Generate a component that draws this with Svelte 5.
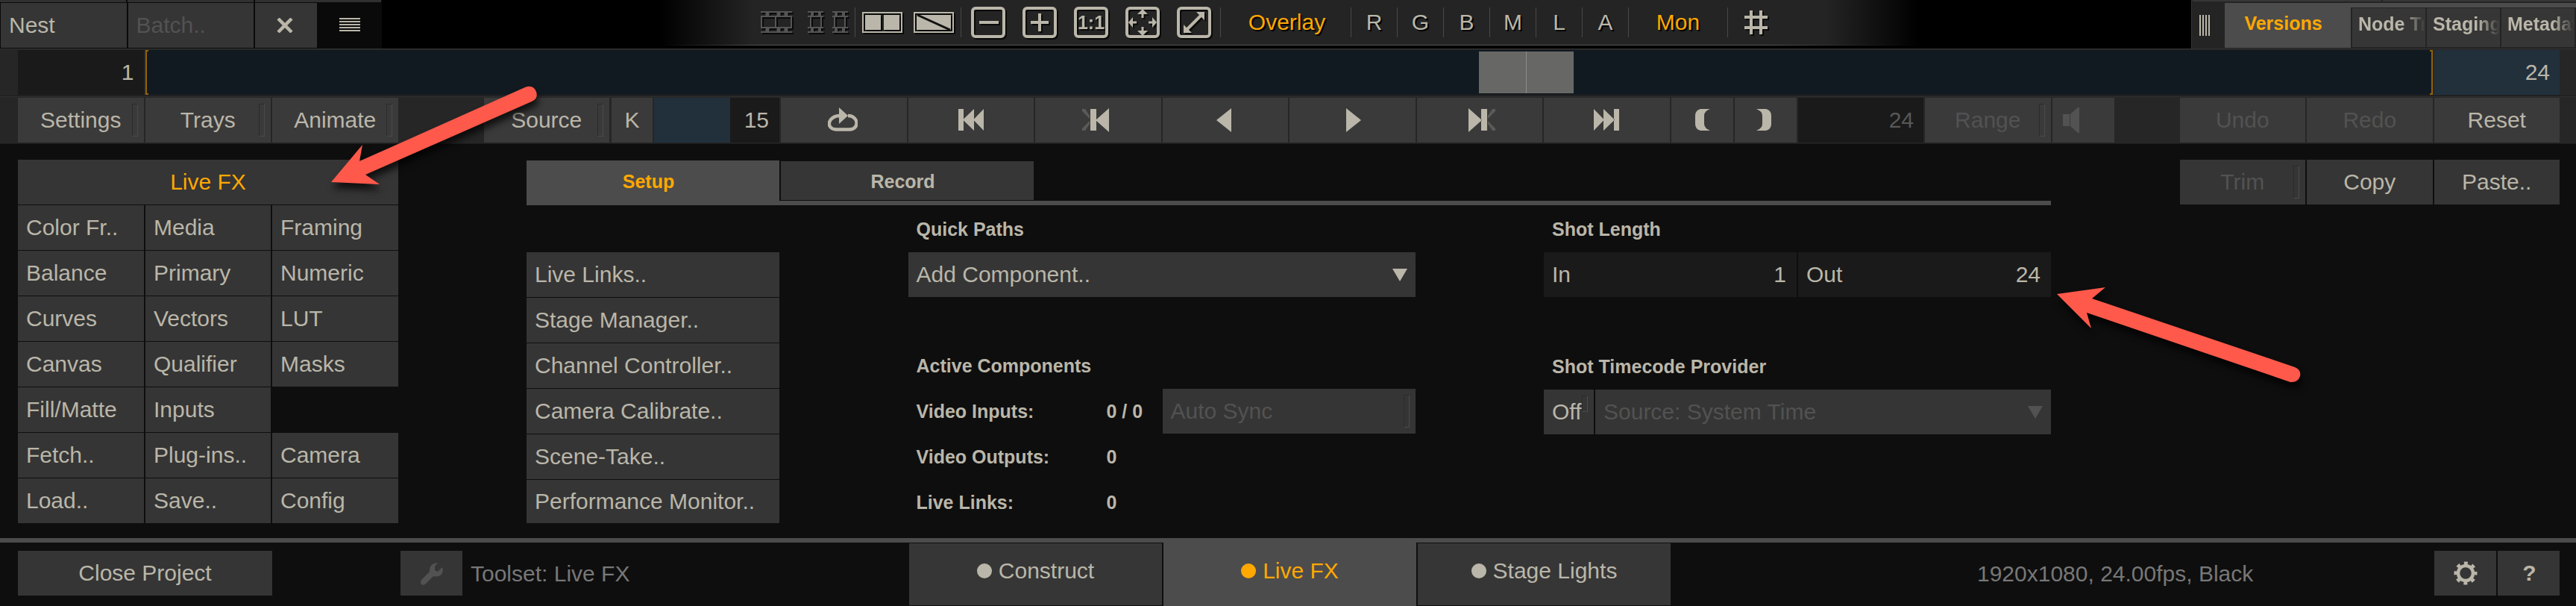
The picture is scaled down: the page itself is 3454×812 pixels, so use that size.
<script>
  const menus = ['Settings', 'Trays', 'Animate'];
  const channels = ['R', 'G', 'B', 'M', 'L', 'A'];
  const sideTabs = ['Node Tr', 'Staging', 'Metadat'];

  // an empty string leaves a hole in the grid
  const tools = [
    'Color Fr..', 'Media', 'Framing',
    'Balance', 'Primary', 'Numeric',
    'Curves', 'Vectors', 'LUT',
    'Canvas', 'Qualifier', 'Masks',
    'Fill/Matte', 'Inputs', '',
    'Fetch..', 'Plug-ins..', 'Camera',
    'Load..', 'Save..', 'Config'
  ];

  const setupItems = [
    'Live Links..',
    'Stage Manager..',
    'Channel Controller..',
    'Camera Calibrate..',
    'Scene-Take..',
    'Performance Monitor..'
  ];

  const footerTabs = ['Construct', 'Live FX', 'Stage Lights'];
  let activeTab = 'Live FX';

  const frames = 24;
  const frame = 15;
</script>

<div class="app">
  <header class="top">
    <div class="nest">
      <div class="sliver"><i></i><i></i><i></i></div>
      <div class="nest-row">
        <button class="btn left">Nest</button>
        <button class="btn left disabled">Batch..</button>
        <button class="btn half">
          <svg class="cross" width="22" height="20" viewBox="0 0 22 20" fill="none" stroke="currentColor">
            <path stroke-width="4.500" d="M2 1L20 19M20 1L2 19" />
          </svg>
        </button>
        <div class="burger">
          <svg width="28" height="18" viewBox="0 0 28 18" fill="currentColor">
            <path d="M0 0h28v2H0zM0 4h28v2H0zM0 8h28v2H0zM0 12h28v2H0zM0 16h28v2H0z" />
          </svg>
        </div>
      </div>
    </div>

    <div class="view-bar">
      <svg class="dim film" width="42" height="30" viewBox="0 0 42 30" fill="none" stroke="currentColor" stroke-width="2">
        <path d="M0 1h42M0 7h42M0 22h42M0 28h42M1 7v15M41 7v15M20 7v15" />
        <path stroke-width="5" d="M9 1v6M24 1v6M34 1v6M9 22v6M24 22v6M34 22v6" />
      </svg>
      <svg class="dim film-split" width="54" height="30" viewBox="0 0 54 30" fill="none" stroke="currentColor" stroke-width="2">
        <path d="M0 1h21M0 7h21M0 22h21M0 28h21M4 7v15M18 7v15M33 1h21M33 7h21M33 22h21M33 28h21M36 7v15M50 7v15" />
        <path stroke-width="4" d="M6 1v6M16 1v6M6 22v6M16 22v6M38 1v6M48 1v6M38 22v6M48 22v6" />
      </svg>
      <span class="sep"></span>
      <svg class="panes" width="54" height="28" viewBox="0 0 54 28">
        <path fill="none" stroke="currentColor" stroke-width="2" d="M1 1h52v26H1z" />
        <path fill="currentColor" d="M4 4h21v20H4zM29 4h21v20H29z" />
      </svg>
      <svg class="wipe" width="54" height="28" viewBox="0 0 54 28">
        <path fill="none" stroke="currentColor" stroke-width="2" d="M1 1h52v26H1z" />
        <path fill="currentColor" d="M4 4h46v20H4z" />
        <path stroke="#111" stroke-width="3" d="M5 4L49 24" />
      </svg>
      <span class="sep"></span>
      <div class="zooms">
        <svg width="46" height="42" viewBox="0 0 46 42" fill="none" stroke="currentColor" stroke-width="4">
          <rect x="2" y="2" width="42" height="38" rx="4" />
          <path d="M11 21h26" />
        </svg>
        <svg width="46" height="42" viewBox="0 0 46 42" fill="none" stroke="currentColor" stroke-width="4">
          <rect x="2" y="2" width="42" height="38" rx="4" />
          <path d="M11 21h24M23 9v24" />
        </svg>
        <svg width="46" height="42" viewBox="0 0 46 42" fill="none" stroke="currentColor" stroke-width="4">
          <rect x="2" y="2" width="42" height="38" rx="4" />
          <text x="23" y="29.5" text-anchor="middle">1:1</text>
        </svg>
        <svg width="46" height="42" viewBox="0 0 46 42" fill="none" stroke="currentColor" stroke-width="4">
          <rect x="2" y="2" width="42" height="38" rx="4" />
          <path stroke-width="3" d="M23 6v9M23 27v9M6 21h9M31 21h9" />
          <path fill="currentColor" stroke="none" d="M23 3l7 7H16zM23 39l7-7H16zM4 21l6-7v14zM42 21l-6-7v14z" />
        </svg>
        <svg width="46" height="42" viewBox="0 0 46 42" fill="none" stroke="currentColor" stroke-width="4">
          <rect x="2" y="2" width="42" height="38" rx="4" />
          <path d="M13 31L33 11" />
          <path fill="currentColor" stroke="none" d="M37 7v11L26 7zM9 35V24l11 11z" />
        </svg>
      </div>
      <span class="sep"></span>
      <span class="lbl on overlay">Overlay</span>
      {#each channels as c}
        <span class="sep"></span>
        <span class="lbl chan">{c}</span>
      {/each}
      <span class="sep"></span>
      <span class="lbl on mon">Mon</span>
      <span class="sep"></span>
      <svg class="hash" width="31" height="32" viewBox="0 0 31 32" stroke="currentColor">
        <path stroke-width="4" d="M0 9h31M0 23h31M9 0v32M22 0v32" />
      </svg>
    </div>

    <div class="side">
      <div class="side-sliver"><i></i><i></i></div>
      <div class="side-row">
        <div class="grip">
          <svg width="14" height="28" viewBox="0 0 14 28" fill="currentColor">
            <path d="M0 0h2v28H0zM4 0h2v28H4zM8 0h2v28H8zM12 0h2v28H12z" />
          </svg>
        </div>
        <div class="side-active">Versions</div>
        <div class="side-tabs">
          {#each sideTabs as t}
            <div class="side-tab"><span>{t}</span></div>
          {/each}
        </div>
      </div>
    </div>
  </header>

  <div class="timeline">
    <div class="num">1</div>
    <div class="track">
      <div class="bracket open"></div>
      <div class="head"></div>
      <div class="bracket close"></div>
    </div>
    <div class="num end">{frames}</div>
  </div>

  <div class="toolbar">
    {#each menus as m}
      <button class="btn">{m}<i class="notch"></i></button>
    {/each}
    <button class="btn source">Source<i class="notch"></i></button>
    <button class="btn key">K</button>
    <div class="counter"><span>{frame}</span></div>
    <button class="btn">
      <svg class="loop" width="40" height="34" viewBox="0 0 40 34">
        <path fill="none" stroke="currentColor" stroke-width="4.5" d="M17 11C-1 11 -3 29 11 29.5H29C43 29 41 11 27 11" />
        <path fill="currentColor" d="M15 0L27 11L15 22z" />
      </svg>
    </button>
    <button class="btn">
      <svg width="34" height="30" viewBox="0 0 34 30" fill="currentColor">
        <path d="M0 0h7v29H0zM21 0v29L6 14.500zM34 0v29L20 14.500z" />
      </svg>
    </button>
    <button class="btn">
      <svg width="43" height="32" viewBox="0 0 43 32" fill="currentColor">
        <path fill="#5a5a57" d="M0 1h4l6 9v4L0 4zM0 30h4l6-9v-4L0 27z" />
        <path d="M11 1h8v29h-8zM36 0v32L18 16z" />
      </svg>
    </button>
    <button class="btn">
      <svg class="rev" width="20" height="32" viewBox="0 0 20 32" fill="currentColor"><path d="M20 0v32L0 16z" /></svg>
    </button>
    <button class="btn">
      <svg class="play" width="20" height="32" viewBox="0 0 20 32" fill="currentColor"><path d="M0 0v32l20-16z" /></svg>
    </button>
    <button class="btn">
      <svg class="fwd" width="36" height="32" viewBox="0 0 36 32" fill="currentColor">
        <path fill="#5a5a57" d="M36 1h-4l-6 9v4l10-10zM36 30h-4l-6-9v-4l10 10z" />
        <path d="M17 1h8v29h-8zM0 0v32l18-16z" />
      </svg>
    </button>
    <button class="btn">
      <svg width="34" height="30" viewBox="0 0 34 30" fill="currentColor">
        <path d="M27 0h7v29h-7zM13 0v29l15-14.500zM0 0v29l14-14.500z" />
      </svg>
    </button>
    <button class="btn half">
      <svg class="open-paren" width="20" height="30" viewBox="0 0 20 30" fill="currentColor">
        <path d="M20 0H7Q0 2 0 9v11q0 7 7 9h13q-8-3-8-9V9q0-6 8-9z" />
      </svg>
    </button>
    <button class="btn half">
      <svg class="close-paren" width="20" height="30" viewBox="0 0 20 30" fill="currentColor">
        <path d="M0 0h13q7 2 7 9v11q0 7-7 9H0q8-3 8-9V9q0-6-8-9z" />
      </svg>
    </button>
    <div class="num dim-num">{frames}</div>
    <button class="btn disabled">Range<i class="notch"></i></button>
    <button class="btn half speaker disabled">
      <svg width="23" height="34" viewBox="0 0 23 34" fill="currentColor">
        <path d="M0 9h9v16H0zM10 9L20 0h2v34h-2L10 25z" />
      </svg>
    </button>
    <span class="push"></span>
    <button class="btn disabled">Undo</button>
    <button class="btn disabled">Redo</button>
    <button class="btn">Reset</button>
  </div>

  <main>
    <div class="tools">
      <button class="btn title">Live FX</button>
      {#each tools as t}
        {#if t}
          <button class="btn left">{t}</button>
        {:else}
          <span></span>
        {/if}
      {/each}
    </div>

    <section class="setup">
      <div class="tabs">
        <div class="tab active">Setup</div>
        <div class="tab">Record</div>
      </div>
      <div class="cols">
        <div class="list">
          {#each setupItems as item}
            <button class="btn left">{item}</button>
          {/each}
        </div>

        <div class="col">
          <h3>Quick Paths</h3>
          <div class="select">Add Component..
            <svg width="20" height="17" viewBox="0 0 20 17" fill="currentColor"><path d="M0 0h20L10 17z" /></svg>
          </div>
          <span></span>
          <h3>Active Components</h3>
          <div class="stat">
            <b>Video Inputs:</b><b>0 / 0</b>
            <button class="btn left disabled sync">Auto Sync<i class="notch"></i></button>
          </div>
          <div class="stat"><b>Video Outputs:</b><b>0</b></div>
          <div class="stat"><b>Live Links:</b><b>0</b></div>
        </div>

        <div class="col">
          <h3>Shot Length</h3>
          <div class="pair">
            <div class="field"><span>In</span><span>1</span></div>
            <div class="field"><span>Out</span><span>{frames}</span></div>
          </div>
          <span></span>
          <h3 class="low">Shot Timecode Provider</h3>
          <div class="provider">
            <button class="btn left off">Off<i class="notch"></i></button>
            <div class="select disabled">Source: System Time
              <svg width="20" height="17" viewBox="0 0 20 17" fill="currentColor"><path d="M0 0h20L10 17z" /></svg>
            </div>
          </div>
        </div>
      </div>
    </section>

    <div class="actions">
      <button class="btn disabled">Trim<i class="notch"></i></button>
      <button class="btn">Copy</button>
      <button class="btn">Paste..</button>
    </div>
  </main>

  <footer>
    <button class="btn close-project">Close Project</button>
    <button class="btn wrench disabled">
      <svg width="30" height="31" viewBox="0 0 30 31" fill="currentColor">
        <path d="M23 1L19 6v5l4 2 6-6q3 9-5 12-4 1-7 0L7 29q-3 3-6 1-2-2 0-6L12 13Q11 2 23 1z" />
      </svg>
    </button>
    <span class="muted">Toolset: Live FX</span>
    <div class="footer-tabs">
      {#each footerTabs as t}
        <button class="ftab" class:active={t === activeTab} on:click={() => (activeTab = t)}>
          <i class="dot"></i>{t}
        </button>
      {/each}
    </div>
    <span class="muted info">1920x1080, 24.00fps, Black</span>
    <div class="foot-icons">
      <button class="btn half">
        <svg width="32" height="32" viewBox="0 0 32 32" fill="none" stroke="currentColor">
          <circle cx="16" cy="16" r="10" stroke-width="4.500" />
          <circle cx="16" cy="16" r="13.500" stroke-width="4" stroke-dasharray="5 5.600" stroke-dashoffset="2.500" />
        </svg>
      </button>
      <button class="btn half help">?</button>
    </div>
  </footer>

  <!-- callout arrows over the panel -->
  <svg class="callouts" width="3454" height="812" viewBox="0 0 3454 812">
    <path d="M444 244L486 194L482 216L704 117Q715 113 719 123Q722 132 713 136L490 234L509 247Z" />
    <path d="M2758 394L2823 385L2805 400L3077 492Q3086 496 3084 504Q3081 513 3071 512L2798 419L2804 440Z" />
  </svg>
</div>

<style>
  :global(body) {
    background: #0e0e0e;
  }

  .app {
    position: relative;
    display: flex;
    flex-direction: column;
    width: 3454px;
    height: 812px;
    overflow: hidden;
    background: #0e0e0e;
    color: #bab6a9;
    font-family: "Liberation Sans", Arial, sans-serif;
    font-size: 30px;
  }

  svg {
    display: block;
    flex: none;
  }

  .btn {
    position: relative;
    display: flex;
    flex: none;
    align-items: center;
    justify-content: center;
    box-sizing: border-box;
    width: 168.5px;
    height: 60px;
    margin: 0;
    padding: 0;
    border: 0;
    background: #353535;
    color: inherit;
    font: inherit;
    white-space: nowrap;
  }

  .btn.left {
    justify-content: flex-start;
    padding-left: 11px;
  }

  .btn.half {
    width: 83px;
  }

  .app .disabled {
    color: #525252;
  }

  .notch {
    position: absolute;
    top: 8px;
    right: 8px;
    box-sizing: border-box;
    width: 8px;
    height: 44px;
    border: 1px solid #2b2b2b;
    border-right-color: #4b4b4b;
    border-bottom-color: #4b4b4b;
  }

  .num {
    flex: none;
    box-sizing: border-box;
    width: 168.5px;
    height: 60px;
    padding-right: 13px;
    background: #1a1a1a;
    line-height: 60px;
    text-align: right;
  }

  /* top row */
  .top {
    display: flex;
    flex: none;
    height: 65px;
    background: #000;
  }

  .nest {
    width: 512px;
    background: #0a0a0a;
  }

  .sliver {
    display: flex;
    gap: 2px;
    height: 3px;
    margin-bottom: 1px;
  }

  .sliver i {
    width: 169px;
    background: #303030;
  }

  .nest-row {
    display: flex;
    gap: 2px;
    padding-left: 1px;
  }

  .cross {
    margin-right: 3px;
  }

  .burger {
    display: flex;
    align-items: center;
    padding-left: 28px;
    height: 58px;
  }

  .view-bar {
    display: flex;
    align-items: center;
    box-sizing: border-box;
    width: 1690px;
    height: 61px;
    margin-left: 371px;
    padding-left: 137px;
    border-bottom: 1px solid;
    border-image: linear-gradient(90deg, #000, #555 8%, #555 88%, #000) 1;
    background: linear-gradient(90deg, #000, #242424 127px, #242424 1565px, #000);
  }

  .view-bar svg {
    filter: drop-shadow(2px 2px 0 #0a0a0a);
  }

  .dim {
    color: #555;
  }

  .film-split {
    margin: 0 9px 0 21px;
  }

  .sep {
    flex: none;
    width: 1px;
    height: 40px;
    background: #484848;
  }

  .panes {
    margin: 0 15px 0 9px;
  }

  .wipe {
    margin-right: 9px;
  }

  .zooms {
    display: flex;
    gap: 23px;
    margin: 0 12px 0 13px;
  }

  .zooms text {
    fill: currentColor;
    stroke: none;
    font-size: 25px;
    font-weight: bold;
  }

  .lbl {
    flex: none;
    text-align: center;
    text-shadow: 2px 2px 0 #000;
  }

  .on,
  .btn.title {
    color: #ffa800;
  }

  .overlay {
    width: 174px;
    text-indent: 3px;
  }

  .chan {
    width: 61px;
  }

  .mon {
    width: 132px;
  }

  .hash {
    margin-left: 22px;
  }

  .side {
    display: flex;
    flex: none;
    flex-direction: column;
    box-sizing: border-box;
    width: 516px;
    margin-left: auto;
    overflow: hidden;
    border-left: 1px solid #333;
    background: #242424;
    font-size: 25px;
    font-weight: bold;
  }

  .side-sliver {
    display: flex;
    gap: 2px;
    height: 2px;
    margin: 0 0 2px 1px;
  }

  .side-sliver i {
    flex: none;
    width: 253px;
    background: #363636;
  }

  .side-sliver i:last-child {
    width: 260px;
  }

  .side-row {
    display: flex;
    height: 60px;
  }

  .grip {
    width: 44px;
    padding: 16px 0 0 10px;
    box-sizing: border-box;
  }

  .side-active {
    width: 169px;
    box-sizing: border-box;
    padding-right: 12px;
    background: #4c4c4c;
    color: #ffa800;
    line-height: 55px;
    text-align: center;
  }

  .side-tabs {
    display: flex;
    flex: 1;
    gap: 2px;
    box-sizing: border-box;
    border-top: 6px solid #4c4c4c;
    padding: 1px 2px 1px;
  }

  .side-tab {
    width: 98px;
    height: 52px;
    overflow: hidden;
    background: #363636;
    line-height: 42px;
    white-space: nowrap;
  }

  .side-tab span {
    display: block;
    padding-left: 8px;
    mask-image: linear-gradient(90deg, #000 70%, transparent);
  }

  /* timeline */
  .timeline,
  .toolbar {
    display: flex;
    flex: none;
    box-sizing: border-box;
    height: 64px;
    padding: 1px 22px 0 24px;
    gap: 2px;
    border-top: 1px solid #323232;
    border-bottom: 1px solid #1b1b1b;
    background: #262626;
  }

  .track {
    display: flex;
    flex: 1;
    height: 60px;
    background: #121a21;
  }

  .bracket {
    box-sizing: border-box;
    width: 4px;
    border: 2px solid #936205;
  }

  .bracket.open {
    border-right: 0;
  }

  .bracket.close {
    margin-left: auto;
    border-left: 0;
  }

  .head {
    width: 127px;
    height: 56px;
    margin: 2px 0 0 1784px;
    background: linear-gradient(90deg, #676865 63px, #8d8e88 63px, #8d8e88 64px, #676865 64px);
  }

  .num.end {
    background: #22303c;
  }

  /* toolbar */
  .toolbar .btn {
    background: #3a3a3a;
  }

  .toolbar .source {
    margin-left: 113px;
  }

  .toolbar .key {
    width: 55px;
    margin-left: 1px;
  }

  .counter {
    display: flex;
    flex: none;
    justify-content: flex-end;
    width: 168px;
    height: 60px;
    background: #22303c;
    line-height: 60px;
  }

  .counter span {
    box-sizing: border-box;
    width: 66px;
    padding-right: 14px;
    background: #1a1a1a;
    text-align: right;
  }

  .loop,
  .rev {
    margin-right: 3px;
  }

  .play {
    margin-left: 3px;
  }

  .fwd {
    margin-left: 6px;
  }

  .open-paren {
    margin-left: 2px;
  }

  .close-paren {
    margin-right: 4px;
  }

  .dim-num {
    color: #585858;
  }

  .toolbar .speaker {
    justify-content: flex-start;
    padding-left: 14px;
  }

  .push {
    flex: 1;
  }

  /* main panel */
  main {
    display: flex;
    height: 528px;
    box-sizing: border-box;
    padding: 21px 22px 0 24px;
  }

  .tools {
    display: grid;
    grid-template-columns: 169px 168px 169px;
    grid-auto-rows: 60px;
    gap: 1px 2px;
    align-content: start;
    width: 510px;
  }

  .tools .btn {
    width: auto;
  }

  .tools .title {
    grid-column: 1 / -1;
  }

  .setup {
    width: 2044px;
    margin-left: 172px;
    padding-top: 1px;
  }

  .tabs {
    display: flex;
    gap: 2px;
    height: 60px;
    background: linear-gradient(#0e0e0e 54px, #4c4c4c 54px);
  }

  .tab {
    box-sizing: border-box;
    width: 339px;
    height: 52px;
    margin-top: 1px;
    padding-right: 12px;
    background: #363636;
    font-size: 25px;
    font-weight: bold;
    line-height: 54px;
    text-align: center;
  }

  .tab.active {
    height: 60px;
    margin-top: 0;
    background: #4c4c4c;
    color: #ffa800;
    line-height: 56px;
  }

  .cols {
    display: grid;
    grid-template-columns: 339px 680px 680px;
    column-gap: 172.5px;
    padding-top: 2px;
  }

  .list {
    display: flex;
    flex-direction: column;
    gap: 1px;
    padding-top: 61px;
  }

  .list .btn {
    width: auto;
  }

  .list .btn:last-child {
    height: 58px;
    line-height: 60px;
  }

  .col {
    display: grid;
    grid-template-rows: repeat(7, 60px);
    row-gap: 1px;
  }

  h3 {
    margin: 0;
    padding-left: 11px;
    font-size: 25px;
    line-height: 60px;
  }

  .low {
    padding-top: 1px;
  }

  .select {
    display: flex;
    flex: 1;
    align-items: center;
    justify-content: space-between;
    padding: 0 11px;
    background: #353535;
  }

  .stat {
    display: flex;
    align-items: center;
    padding-left: 11px;
    font-size: 25px;
  }

  .stat b:first-child {
    width: 255px;
  }

  .btn.sync {
    width: 339px;
    margin-left: auto;
    font-size: 30px;
  }

  .pair {
    display: flex;
    gap: 2px;
  }

  .field {
    display: flex;
    flex: 1;
    align-items: center;
    justify-content: space-between;
    padding: 0 14px 0 11px;
    background: #1a1a1a;
  }

  .provider {
    display: flex;
    gap: 2px;
    padding-top: 1px;
    height: 60px;
  }

  .btn.off {
    width: 67px;
  }

  .off .notch {
    height: 22px;
  }

  .actions {
    display: flex;
    gap: 2px;
    margin-left: auto;
  }

  /* footer */
  footer {
    display: flex;
    height: 85px;
    box-sizing: border-box;
    padding: 11px 22px 0 24px;
    box-shadow: 0 -6px 0 #4c4c4c;
    margin-top: 6px;
  }

  .btn.close-project {
    width: 341px;
  }

  .btn.wrench {
    width: 83px;
    margin-left: 172px;
  }

  .muted {
    width: 587px;
    box-sizing: border-box;
    padding-left: 11px;
    color: #777;
    line-height: 61px;
  }

  .footer-tabs {
    display: flex;
    gap: 2px;
    height: 83px;
    margin: -10px 0 0 12px;
  }

  .ftab {
    display: flex;
    align-items: center;
    justify-content: center;
    gap: 9px;
    box-sizing: border-box;
    width: 339px;
    height: 83px;
    margin: 0;
    padding: 0 0 10px;
    border: 0;
    background: #363636;
    color: inherit;
    font: inherit;
  }

  .ftab.active {
    height: 85px;
    margin-top: -1px;
    background: #4c4c4c;
    color: #ffa800;
  }

  .dot {
    width: 20px;
    height: 20px;
    border-radius: 50%;
    background: currentColor;
  }

  .info {
    width: auto;
    margin-left: 400px;
    white-space: nowrap;
  }

  .foot-icons {
    display: flex;
    gap: 2px;
    margin-left: auto;
  }

  .help {
    padding-left: 2px;
    font-weight: bold;
  }

  .callouts {
    position: absolute;
    top: 0;
    left: 0;
    fill: #ff594b;
    filter: drop-shadow(2px 8px 5px rgba(0, 0, 0, 0.7));
    pointer-events: none;
  }
</style>
